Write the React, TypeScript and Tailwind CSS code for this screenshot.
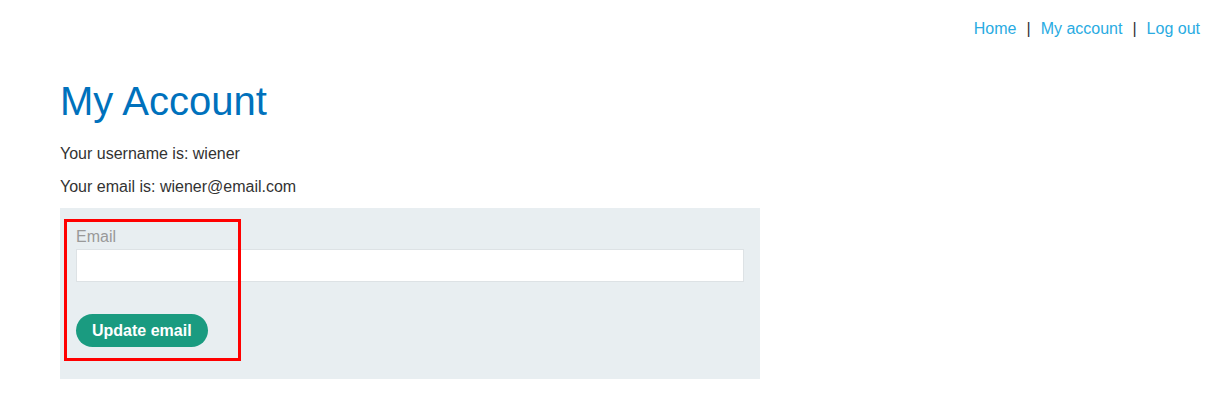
import React from 'react';

const App = () => {
  return (
    <div className="relative w-full h-[402px] bg-white font-['Liberation_Sans',Arial,sans-serif] text-[#333333] text-[16px]">
      {/* top nav */}
      <nav className="flex justify-end pr-[14px] pt-[19px] leading-[20px]">
        <a href="#" className="text-[#29abe2]">Home</a>
        <span className="mx-[10px]">|</span>
        <a href="#" className="text-[#29abe2]">My account</a>
        <span className="mx-[10px]">|</span>
        <a href="#" className="text-[#29abe2]">Log out</a>
      </nav>

      <div className="px-[60px]">
        <h1 className="mt-[39px] text-[40px] leading-[46px] text-[#0071bc]">My Account</h1>
        <p className="mt-[18px] leading-[24px]">Your username is: wiener</p>
        <p className="mt-[9px] leading-[24px]">Your email is: wiener@email.com</p>

        <form className="mt-[9px] w-[700px] bg-[#e8eef1] px-[16px] pt-[19px] pb-[32px]">
          <label className="block leading-[20px] text-[#999999]">Email</label>
          <input
            type="email"
            className="mt-[2px] block w-[668px] h-[33px] bg-white border border-[#dde2e5] outline-none"
          />
          <button
            type="button"
            className="mt-[32px] h-[33px] px-[16px] rounded-full bg-[#1a9b80] text-white font-bold leading-[33px]"
          >
            Update email
          </button>
        </form>
      </div>

      {/* highlight overlay */}
      <div className="absolute left-[64px] top-[219px] w-[177px] h-[142px] border-[3px] border-[#ff0000] pointer-events-none" />
    </div>
  );
};

export default App;
